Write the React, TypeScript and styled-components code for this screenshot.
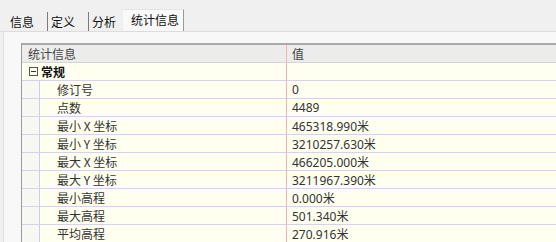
import React from "react";
import styled, { createGlobalStyle } from "styled-components";

const GlobalStyle = createGlobalStyle`
    html, body {
        margin: 0;
        padding: 0;
        background: #f0f0f0;
        overflow: hidden;
    }
    body {
        font-family: "Noto Sans", "Noto Sans CJK SC", sans-serif;
        font-size: 12px;
        color: #222;
    }
`;

const Page = styled.div`
    width: 556px;
    height: 242px;
    display: flex;
    flex-direction: column;
    background: #f0f0f0;
`;

const TabBar = styled.div`
    display: flex;
    flex-direction: row;
    align-items: flex-end;
    height: 31px;
    padding-left: 6px;
    border-bottom: 1px solid #dcdcdc;
`;

const Tab = styled.div<{ $active?: boolean; $divider?: boolean }>`
    display: flex;
    align-items: center;
    box-sizing: border-box;
    height: ${p => (p.$active ? 22 : 19)}px;
    padding: ${p => (p.$active ? "0 4px 2px 7px" : "0 3px 0 3px")};
    margin-right: 10px;
    margin-left: ${p => (p.$active ? -6 : 0)}px;
    background: ${p => (p.$active ? "#f9f9f9" : "transparent")};
    border-left: ${p => (p.$divider ? "1px solid #7a7a7a" : "1px solid transparent")};
    border-right: ${p => (p.$active ? "1px solid #9a9a9a" : "none")};
    border-top: ${p => (p.$active ? "1px solid #e4e4e4" : "none")};
    color: #111;
    font-family: "Noto Sans CJK SC", sans-serif;
    font-size: 12px;
    line-height: 16px;
    white-space: nowrap;
`;

const Panel = styled.div`
    flex: 1;
    display: flex;
    flex-direction: column;
    padding: 11px 0 0 17px;
    margin-left: 3px;
    background: #f8f8f8;
    border-left: 1px solid #e2e2e2;
    overflow: hidden;
`;

const Table = styled.div`
    display: grid;
    grid-template-columns: 18px 246px 1fr;
    grid-auto-rows: 18px;
    border-top: 2px solid #a9a9a9;
    border-left: 1px solid #9c9c9c;
    background: #fffff0;
`;

const HeaderCell = styled.div<{ $span?: number }>`
    grid-column: span ${p => p.$span || 1};
    display: flex;
    align-items: center;
    padding-left: ${p => (p.$span ? 6 : 5)}px;
    background: #ececec;
    border-bottom: 1px solid #d4d4d4;
    border-left: ${p => (p.$span ? "none" : "1px solid #f0b4b4")};
    color: #444;
    font-family: "Noto Sans CJK SC", sans-serif;
    font-size: 12px;
`;

const GroupCell = styled.div<{ $span?: number }>`
    grid-column: span ${p => p.$span || 1};
    display: flex;
    align-items: center;
    gap: 3px;
    padding-left: ${p => (p.$span ? 7 : 5)}px;
    border-bottom: 1px solid #d6d2ee;
    border-left: ${p => (p.$span ? "none" : "1px solid #f0b4b4")};
    font-family: "Noto Sans CJK SC", sans-serif;
    font-weight: 700;
    font-size: 12px;
    color: #111;
`;

const Toggle = styled.span`
    display: inline-flex;
    align-items: center;
    justify-content: center;
    box-sizing: border-box;
    width: 9px;
    height: 9px;
    border: 1px solid #555;

    &::after {
        content: "";
        width: 5px;
        height: 1px;
        background: #333;
    }
`;

const Indent = styled.div`
    background: #f7f7f4;
    border-bottom: 1px solid #d6d2ee;
    border-right: 1px solid #d0cde6;
`;

const NameCell = styled.div`
    display: flex;
    align-items: center;
    padding-left: 17px;
    border-bottom: 1px solid #d6d2ee;
    color: #333;
    font-family: "Noto Sans CJK SC", sans-serif;
    font-size: 12px;
    white-space: nowrap;
`;

const ValueCell = styled.div`
    display: flex;
    align-items: center;
    padding-left: 5px;
    border-bottom: 1px solid #d6d2ee;
    border-left: 1px solid #f0b4b4;
    color: #333;
    font-family: "Noto Sans", "Noto Sans CJK SC", sans-serif;
    font-size: 12px;
    white-space: nowrap;
`;

const rows: [string, string][] = [
    ["修订号", "0"],
    ["点数", "4489"],
    ["最小 X 坐标", "465318.990米"],
    ["最小 Y 坐标", "3210257.630米"],
    ["最大 X 坐标", "466205.000米"],
    ["最大 Y 坐标", "3211967.390米"],
    ["最小高程", "0.000米"],
    ["最大高程", "501.340米"],
    ["平均高程", "270.916米"],
];

export default function App() {
    return (
        <Page>
            <GlobalStyle />
            <TabBar>
                <Tab>信息</Tab>
                <Tab $divider>定义</Tab>
                <Tab $divider>分析</Tab>
                <Tab $active>统计信息</Tab>
            </TabBar>
            <Panel>
                <Table>
                    <HeaderCell $span={2}>统计信息</HeaderCell>
                    <HeaderCell>值</HeaderCell>
                    <GroupCell $span={2}>
                        <Toggle />
                        常规
                    </GroupCell>
                    <GroupCell />
                    {rows.map(([name, value]) => (
                        <React.Fragment key={name}>
                            <Indent />
                            <NameCell>{name}</NameCell>
                            <ValueCell>{value}</ValueCell>
                        </React.Fragment>
                    ))}
                </Table>
            </Panel>
        </Page>
    );
}
